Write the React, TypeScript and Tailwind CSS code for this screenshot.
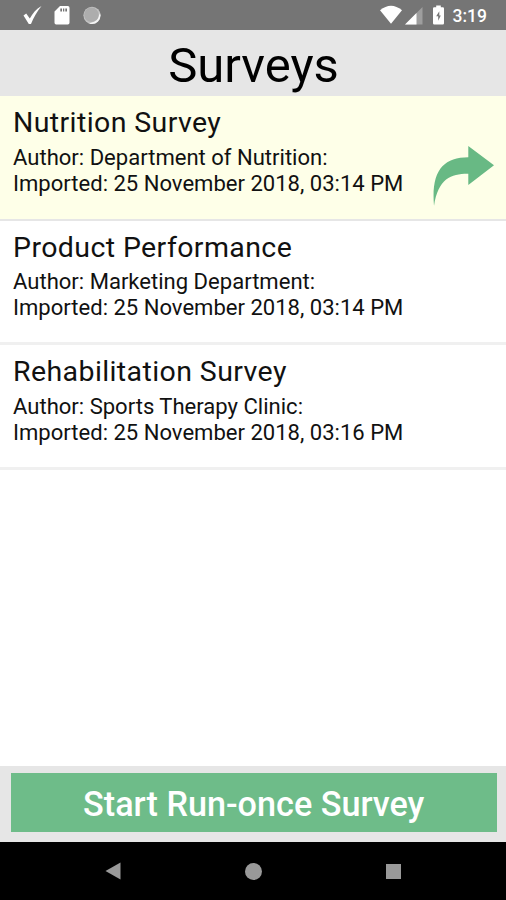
interface Survey {
  title: string;
  author: string;
  imported: string;
  selected?: boolean;
}

const surveys: Survey[] = [
  {
    title: 'Nutrition Survey',
    author: 'Department of Nutrition',
    imported: '25 November 2018, 03:14 PM',
    selected: true,
  },
  {
    title: 'Product Performance',
    author: 'Marketing Department',
    imported: '25 November 2018, 03:14 PM',
  },
  {
    title: 'Rehabilitation Survey',
    author: 'Sports Therapy Clinic',
    imported: '25 November 2018, 03:16 PM',
  },
];

function StatusBar() {
  return (
    <div className="flex h-[30px] shrink-0 items-center justify-between bg-[#757575] pr-[19px] pl-[23px] text-white">
      <div className="flex items-center">
        <svg className="h-5 w-[19px]" viewBox="0 0 19 20" fill="currentColor">
          <path d="M0.5 10.5 3.2 8.5 6.8 13.6C9.5 8.5 13 4 18.5 1 14 6.5 10.5 12.5 8 19H5.8Z" />
        </svg>
        <svg className="ml-3 h-5 w-4" viewBox="0 0 16 20" fill="currentColor">
          <path
            fillRule="evenodd"
            d="M6 1H13.8Q15.5 1 15.5 2.7V17.8Q15.5 19.5 13.8 19.5H2.2Q.5 19.5 .5 17.8V6.5ZM6.3 3.5V6.5H8V3.5ZM9 3.5V6.5H10.3V3.5ZM11.3 3.5V6.5H13V3.5Z"
          />
        </svg>
        <svg className="ml-[13px] h-5 w-[18px]" viewBox="0 0 18 20">
          <circle cx="9" cy="10.3" r="8.6" fill="#c2c2c2" />
          <path d="M17 8A8.5 8.5 0 0 1 6 18.5Q14 17 17 8Z" fill="#f5f5f5" />
          <circle cx="8.5" cy="9.8" r="7.3" fill="#adadad" />
        </svg>
      </div>

      <div className="flex items-center">
        <svg className="h-5 w-[22px]" viewBox="0 0 22 20" fill="currentColor">
          <path d="M0 5.3Q11-3.7 22 5.3L11 18.7Z" />
        </svg>
        <svg className="ml-[3px] h-5 w-[18px]" viewBox="0 0 18 20" fill="currentColor">
          <path d="M17.5 2V19.5H0Z" opacity=".3" />
          <path d="M11.5 8V19.5H0Z" />
        </svg>
        <svg className="ml-2.5 h-5 w-[11px]" viewBox="0 0 11 20" fill="currentColor">
          <path
            fillRule="evenodd"
            d="M3.2.5H7.8V2.3H9.8Q11 2.3 11 3.5V18.3Q11 19.5 9.8 19.5H1.2Q0 19.5 0 18.3V3.5Q0 2.3 1.2 2.3H3.2ZM6.3 6.3 3.2 11.3H5.2V15.7L7.8 10.4H6.3Z"
          />
        </svg>
        <span className="ml-[9px] pt-0.5 text-[17.5px] leading-5 font-medium">3:19</span>
      </div>
    </div>
  );
}

function ShareArrow() {
  return (
    <svg className="mt-12 h-[62px] w-[62px]" viewBox="0 0 62 62" fill="#68b984">
      <path d="M36.3 2 62 21.3 36.3 41V29.7C20 29.5 6 34 2 62 -1 27 11 13.5 36.3 13.3Z" />
    </svg>
  );
}

function SurveyRow({ survey }: { survey: Survey }) {
  return (
    <div
      className={`flex h-[124.5px] shrink-0 justify-between pr-3 pl-[13px] ${
        survey.selected ? 'border-b-2 border-[#e6e6e6] bg-[#feffe8]' : 'border-b-3 border-[#f0f0f0] bg-white'
      }`}
    >
      <div className="pt-2.5 whitespace-nowrap">
        <div className="text-[28.5px] leading-[34px] tracking-[0.4px]">{survey.title}</div>
        <div className="mt-[4.5px] text-[22.05px] leading-[26px]">
          <div>Author: {survey.author}:</div>
          <div>Imported: {survey.imported}</div>
        </div>
      </div>
      {survey.selected && <ShareArrow />}
    </div>
  );
}

function NavigationBar() {
  return (
    <div className="flex h-[58px] shrink-0 items-center justify-between bg-black px-[105px]">
      <svg className="h-[18px] w-4" viewBox="0 0 16 18" fill="#999">
        <path d="M.5 9 15.5 .5V17.5Z" />
      </svg>
      <div className="h-[17px] w-[17px] rounded-full bg-[#999]" />
      <div className="h-[15px] w-[15px] bg-[#999]" />
    </div>
  );
}

export default function App() {
  return (
    <div className="flex h-[900px] w-[506px] flex-col overflow-hidden bg-white font-[Roboto,sans-serif] text-[#111]">
      <StatusBar />
      <h1 className="h-[66px] shrink-0 bg-[#e6e6e6] pt-[7px] pl-px text-center text-[49px] leading-[58px] text-black">
        Surveys
      </h1>
      <div className="flex grow flex-col">
        {surveys.map((survey) => (
          <SurveyRow key={survey.title} survey={survey} />
        ))}
      </div>
      <div className="h-[76px] shrink-0 bg-[#e6e6e6] pt-[6.5px] pr-[9px] pl-[10.5px]">
        <button className="flex h-[59px] w-full items-center justify-center bg-[#6ebc89] pt-1 text-[34.2px] leading-[55px] font-medium text-white">
          Start Run-once Survey
        </button>
      </div>
      <NavigationBar />
    </div>
  );
}
